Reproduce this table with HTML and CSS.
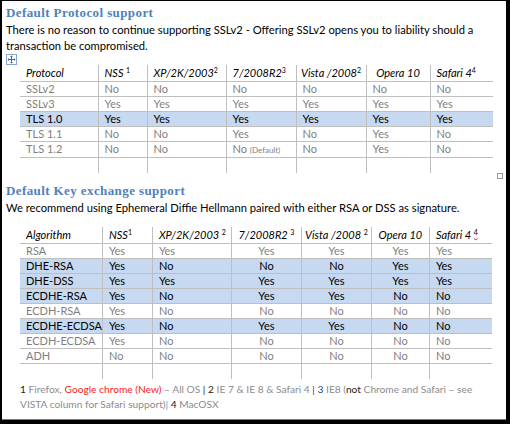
FILE: index.html
```html
<!DOCTYPE html>
<html lang="en">
<head>
  <meta charset="UTF-8" />
  <title>SSL/TLS support</title>
  <link rel="stylesheet" href="styles.css">
</head>
<body>
  <div class="page">
    <h2 class="title">Default Protocol support</h2>
    <p class="intro">There is no reason to continue supporting SSLv2 - Offering SSLv2 opens you to liability should a<br>transaction be compromised.</p>

    <div class="table-wrap">
      <div class="move-row">
        <svg class="move-handle" width="11" height="11" viewBox="0 0 11 11">
          <rect x="0.5" y="0.5" width="10" height="10" fill="#fff" stroke="#8aa6cf"/>
          <path d="M5.5 2.5v6M2.5 5.5h6" stroke="#3d64a8" stroke-width="1"/>
          <path d="M5.5 1.5l-1.5 1.5h3zM5.5 9.5l-1.5-1.5h3zM1.5 5.5l1.5-1.5v3zM9.5 5.5l-1.5-1.5v3z" fill="#3d64a8"/>
        </svg>
      </div>
      <table class="grid proto">
        <colgroup>
          <col style="width:78px"><col style="width:49px"><col style="width:79px"><col style="width:70px"><col style="width:70px"><col style="width:64px"><col style="width:63px">
        </colgroup>
        <tr class="head">
          <th>Protocol</th><th>NSS <span class="sup">1</span></th><th>XP/2K/2003<span class="sup">2</span></th><th>7/2008R2<span class="sup">3</span></th><th class="c">Vista /2008<span class="sup">2</span></th><th class="c">Opera 10</th><th>Safari 4<span class="sup">4</span></th>
        </tr>
        <tr><td>SSLv2</td><td>No</td><td>No</td><td>No</td><td>No</td><td>No</td><td>No</td></tr>
        <tr><td>SSLv3</td><td>Yes</td><td>Yes</td><td>Yes</td><td>Yes</td><td>Yes</td><td>Yes</td></tr>
        <tr class="on"><td>TLS 1.0</td><td>Yes</td><td>Yes</td><td>Yes</td><td>Yes</td><td>Yes</td><td>Yes</td></tr>
        <tr><td>TLS 1.1</td><td>No</td><td>No</td><td>Yes</td><td>No</td><td>Yes</td><td>No</td></tr>
        <tr><td>TLS 1.2</td><td>No</td><td>No</td><td>No <small>(Default)</small></td><td>No</td><td>Yes</td><td>No</td></tr>
        <tr class="last"><td></td><td></td><td></td><td></td><td></td><td></td><td></td></tr>
      </table>
      <span class="size-handle"></span>
    </div>

    <h2 class="title second">Default Key exchange support</h2>
    <p class="intro">We recommend using Ephemeral Diffie Hellmann paired with either RSA or DSS as signature.</p>

    <div class="table-wrap">
      <div class="move-row"></div>
      <table class="grid kex">
        <colgroup>
          <col style="width:77px"><col style="width:50px"><col style="width:79px"><col style="width:70px"><col style="width:70px"><col style="width:58px"><col style="width:63px">
        </colgroup>
        <tr class="head">
          <th>Algorithm</th><th>NSS<span class="sup">1</span></th><th>XP/2K/2003 <span class="sup">2</span></th><th class="c">7/2008R2 <span class="sup">3</span></th><th class="c">Vista /2008 <span class="sup">2</span></th><th class="c">Opera 10</th><th>Safari 4 <span class="sup squiggle">4</span></th>
        </tr>
        <tr><td>RSA</td><td>Yes</td><td>Yes</td><td>Yes</td><td>Yes</td><td>Yes</td><td>Yes</td></tr>
        <tr class="on"><td>DHE-RSA</td><td>Yes</td><td>No</td><td>No</td><td>No</td><td>Yes</td><td>Yes</td></tr>
        <tr class="on"><td>DHE-DSS</td><td>Yes</td><td>Yes</td><td>Yes</td><td>Yes</td><td>Yes</td><td>Yes</td></tr>
        <tr class="on"><td>ECDHE-RSA</td><td>Yes</td><td>No</td><td>Yes</td><td>Yes</td><td>No</td><td>No</td></tr>
        <tr><td>ECDH-RSA</td><td>Yes</td><td>No</td><td>No</td><td>No</td><td>No</td><td>No</td></tr>
        <tr class="on"><td>ECDHE-ECDSA</td><td>Yes</td><td>No</td><td>Yes</td><td>Yes</td><td>No</td><td>No</td></tr>
        <tr><td>ECDH-ECDSA</td><td>Yes</td><td>No</td><td>No</td><td>No</td><td>No</td><td>No</td></tr>
        <tr><td>ADH</td><td>No</td><td>No</td><td>No</td><td>No</td><td>No</td><td>No</td></tr>
        <tr class="last"><td></td><td></td><td></td><td></td><td></td><td></td><td></td></tr>
      </table>
    </div>

    <p class="notes">
      <b>1</b> Firefox, <span class="red">Google chrome (New)</span> – All OS <span class="bar">|</span> <b>2</b> IE 7 &amp; IE 8 &amp; Safari 4 <span class="bar red">|</span> <b class="blue">3</b> IE8 (<b>not</b> Chrome and Safari – see<br>VISTA column for Safari support)<span class="bar blue">|</span> <b>4</b> MacOSX
    </p>
  </div>
</body>
</html>
```

FILE: styles.css
```css
* { box-sizing: border-box; }

body {
  margin: 0;
  background: #000;
  font-family: Lato, "Liberation Sans", sans-serif;
}

.page {
  margin: 1px 0 0 2px;
  width: 504px;
  height: 419px;
  padding: 3px 0 0 4px;
  background: #fff;
  border-bottom: 1px solid #7a7a7a;
  overflow: hidden;
}

.title {
  margin: 0;
  font: bold 13px/17px "Liberation Serif", serif;
  letter-spacing: 0.4px;
  color: #4f81bd;
}

.title.second {
  margin-top: 9px;
}

.intro {
  margin: 1px 0 0;
  font-size: 11.2px;
  line-height: 16px;
  color: #000;
}

.table-wrap {
  position: relative;
  padding-left: 14px;
}

.move-row {
  height: 11px;
}

.move-handle {
  display: block;
  margin-left: -14px;
}

.size-handle {
  position: absolute;
  left: 491px;
  bottom: -6px;
  width: 6px;
  height: 6px;
  border: 1px solid #9a9a9a;
  background: #fff;
}

.grid {
  border-collapse: collapse;
  table-layout: fixed;
  font-size: 11px;
  color: #7f7f7f;
}

.grid th,
.grid td {
  height: 15px;
  padding: 0 0 0 6px;
  line-height: 14px;
  text-align: left;
  white-space: nowrap;
  border-bottom: 1px solid #bfbfbf;
}

.grid th + th,
.grid td + td {
  border-left: 1px solid #bfbfbf;
}

.grid th {
  height: 16px;
  font-weight: normal;
  font-style: italic;
  color: #000;
}

.grid th.c {
  padding: 0;
  text-align: center;
}

.grid tr.last td {
  border-bottom: none;
  height: 16px;
}

.grid tr.on td {
  background: #c6d9f1;
  color: #000;
}

.kex td:nth-child(4),
.kex td:nth-child(5),
.kex td:nth-child(6) {
  padding: 0;
  text-align: center;
}

.grid small {
  font-size: 8px;
}

.sup {
  font-size: 7px;
  line-height: 0;
  vertical-align: 4px;
  font-style: normal;
}

.squiggle {
  text-decoration: underline wavy #e02020;
}

.notes {
  margin: 3px 0 0 14px;
  font-size: 10.2px;
  line-height: 15px;
  color: #8c8c8c;
}

.notes b {
  font-weight: normal;
  color: #1a1a1a;
}

.notes .red {
  color: #ff1a1a;
}

.notes .blue {
  color: #1f3f8f;
}

.notes .bar {
  color: #1a1a1a;
}

.notes .bar.red {
  color: #a01010;
}

.notes .bar.blue {
  color: #4aa3df;
}
```
